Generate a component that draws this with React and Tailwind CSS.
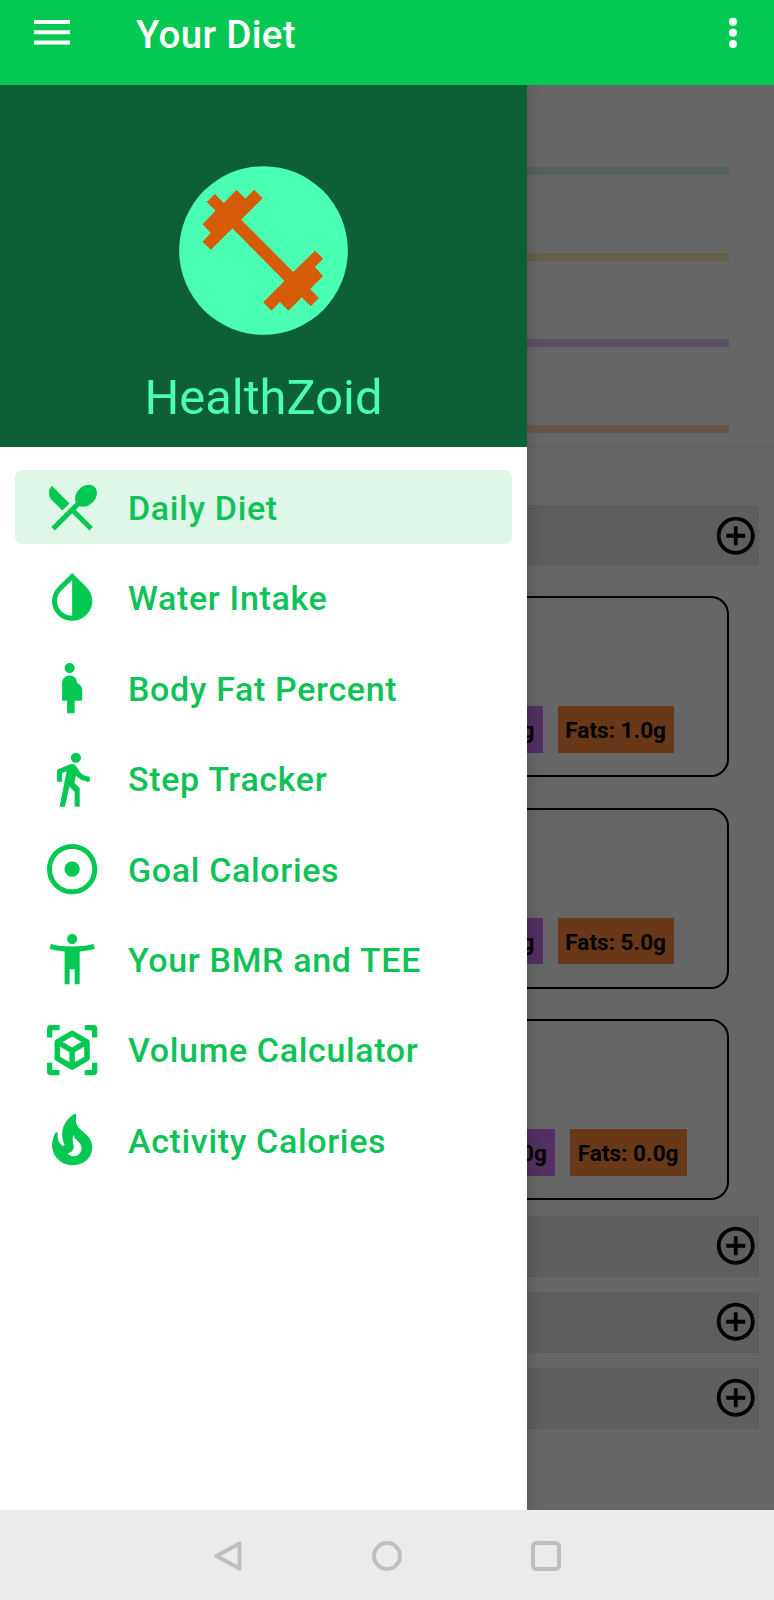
import {
  MdRestaurantMenu,
  MdInvertColors,
  MdPregnantWoman,
  MdDirectionsWalk,
  MdAdjust,
  MdAccessibilityNew,
  MdAddCircleOutline,
} from "react-icons/md";

function CubeScanIcon({ className }) {
  return (
    <svg className={className} viewBox="0 0 24 24" fill="none">
      <path
        fill="currentColor"
        d="M2 7V3.5A1.5 1.5 0 0 1 3.5 2H7v2.1H4.1V7zM17 2h3.5A1.5 1.5 0 0 1 22 3.5V7h-2.100V4.100H17zM22 17v3.5a1.5 1.5 0 0 1-1.5 1.5H17v-2.100h2.900V17zM7 22H3.5A1.5 1.5 0 0 1 2 20.500V17h2.100v2.900H7z"
      />
      <path
        stroke="currentColor"
        strokeWidth="2.2"
        strokeLinejoin="round"
        d="M12 5.300 17.900 8.700V15.300L12 18.700 6.100 15.300V8.700ZM6.100 8.700 12 12.150 17.900 8.700M12 12.150V18.700"
      />
    </svg>
  );
}

function FlameIcon({ className }) {
  return (
    <svg className={className} viewBox="0 0 24 24" fill="currentColor">
      <path d="M19.48 12.35c-1.57-4.08-7.16-4.3-5.81-10.23.1-.44-.37-.78-.75-.55C9.29 3.71 6.68 8 8.87 13.62c.18.46-.36.89-.75.59-1.81-1.37-2-3.34-1.84-4.75.06-.52-.62-.77-.91-.34C4.69 10.16 4 11.84 4 14.37c.38 5.6 5.11 7.32 6.81 7.54 2.43.31 5.06-.14 6.95-1.87 2.08-1.93 2.84-5.01 1.72-7.69zm-9.28 5.03c1.44-.35 2.18-1.39 2.38-2.31.33-1.43-.96-2.83-.09-5.09.33 1.87 3.27 3.04 3.27 5.08.08 2.53-2.66 4.7-5.56 2.32z" />
    </svg>
  );
}

const menu = [
  { label: "Daily Diet", Icon: MdRestaurantMenu, active: true },
  { label: "Water Intake", Icon: MdInvertColors },
  { label: "Body Fat Percent", Icon: MdPregnantWoman },
  { label: "Step Tracker", Icon: MdDirectionsWalk },
  { label: "Goal Calories", Icon: MdAdjust },
  { label: "Your BMR and TEE", Icon: MdAccessibilityNew },
  { label: "Volume Calculator", Icon: CubeScanIcon },
  { label: "Activity Calories", Icon: FlameIcon },
];

function TopBar() {
  return (
    <header className="flex h-[85px] shrink-0 items-start bg-[#03c953] text-white">
      <svg className="ml-[34px] mt-[20px] h-[25px] w-[36px]" viewBox="0 0 36 25" fill="currentColor">
        <path d="M0 0h36v4H0zM0 10.2h36v4H0zM0 20.4h36v4H0z" />
      </svg>
      <h1 className="ml-[66px] mt-[13px] text-[38.500px] leading-[44px] font-medium tracking-[0.3px] whitespace-nowrap">
        Your Diet
      </h1>
      <svg className="ml-auto mr-[36px] mt-[17px] h-[31px] w-[10px]" viewBox="0 0 10 31" fill="currentColor">
        <circle cx="5" cy="4.7" r="4" />
        <circle cx="5" cy="15.7" r="4" />
        <circle cx="5" cy="26.9" r="4" />
      </svg>
    </header>
  );
}

function MealRow() {
  return (
    <div className="mr-[15px] flex h-[61px] items-center justify-end bg-[#5e5e60]">
      <MdAddCircleOutline className="mr-[0.5px] size-[45.5px] text-black" />
    </div>
  );
}

function Badge({ className, children }) {
  return (
    <span
      className={
        "flex h-[46.5px] w-[116.5px] items-center justify-end pt-[3px] pr-[8px] text-[22.6px] font-bold whitespace-nowrap text-black " +
        className
      }
    >
      {children}
    </span>
  );
}

function FoodCard({ fats, wide }) {
  return (
    <div className="mr-[45px] flex h-[181px] items-end justify-end rounded-[18px] border-2 border-black pb-[22.3px]">
      <div className={wide ? "mr-[40.5px] flex gap-[15px]" : "mr-[53px] flex gap-[15px]"}>
        <Badge className="bg-[#532f63]">{wide ? "Carbs: 0.0g" : "Carbs: 1.0g"}</Badge>
        <Badge className="bg-[#683819]">{fats}</Badge>
      </div>
    </div>
  );
}

function DietPage() {
  return (
    <main className="flex h-full flex-col bg-[#666666]">
      <section className="flex h-[362px] shrink-0 flex-col gap-[78px] border-b border-[#5b605d] pt-[82px] pr-[45px]">
        <div className="h-2 shrink-0 bg-[#566259]" />
        <div className="h-2 shrink-0 bg-[#655f48]" />
        <div className="h-2 shrink-0 bg-[#5c5163]" />
        <div className="h-2 shrink-0 bg-[#6a5448]" />
      </section>
      <div className="mt-[58px]">
        <MealRow />
      </div>
      <div className="mt-[30px] flex flex-col gap-[30.5px]">
        <FoodCard fats="Fats: 1.0g" />
        <FoodCard fats="Fats: 5.0g" />
        <FoodCard fats="Fats: 0.0g" wide />
      </div>
      <div className="mt-[15.5px] flex flex-col gap-[15px]">
        <MealRow />
        <MealRow />
        <MealRow />
      </div>
    </main>
  );
}

function Logo() {
  return (
    <svg className="h-[169px] w-[169px]" viewBox="178 79 506 507">
      <circle cx="431" cy="332.5" r="253" fill="#4affb2" />
      <path
        fill="#d65c0a"
        d="M285 163 312 190 350 150 377 177 403 150 428 176 364 240 520 397 586 333 610 357 585 383 610 409 571 448 597 475 573 500 546 473 506 513 480 487 455 513 430 488 494 424 338 266 273 330 248 306 273 280 248 254 287 213 261 187Z"
      />
    </svg>
  );
}

function Drawer() {
  return (
    <aside className="absolute inset-y-0 left-0 flex w-[527px] flex-col bg-white shadow-[0_0_16px_rgba(0,0,0,0.22)]">
      <div className="flex h-[362px] shrink-0 flex-col items-center bg-[#0c5f36] pt-[81px]">
        <Logo />
        <p className="mt-[33.5px] text-[48.8px] leading-[58px] text-[#4affb2]">HealthZoid</p>
      </div>
      <nav className="flex flex-col gap-[16.4px] px-[15px] pt-[23px]">
        {menu.map(({ label, Icon, active }) => (
          <a
            key={label}
            className={
              "flex h-[74px] items-center rounded-[7px] pl-[26.7px] text-[#03c953] " +
              (active ? "bg-[#dff7e9]" : "bg-white")
            }
          >
            <Icon className="mt-px size-[60.3px] shrink-0" />
            <span className="ml-[26px] pt-[2px] text-[34px] leading-[40px] font-medium tracking-[0.65px] whitespace-nowrap text-[#0fc257]">
              {label}
            </span>
          </a>
        ))}
      </nav>
    </aside>
  );
}

function SystemNav() {
  return (
    <footer className="flex h-[90px] shrink-0 items-center justify-center gap-[129px] bg-[#ebebeb] pt-px">
      <svg className="size-[30px]" viewBox="0 0 30 30" fill="none" stroke="#bfbfbf" strokeWidth="4" strokeLinejoin="round">
        <path d="M26.500 2.500v25L3.500 15z" />
      </svg>
      <svg className="size-[30px]" viewBox="0 0 30 30" fill="none" stroke="#bfbfbf" strokeWidth="4">
        <circle cx="15" cy="15" r="13" />
      </svg>
      <svg className="size-[30px]" viewBox="0 0 30 30" fill="none" stroke="#bfbfbf" strokeWidth="4">
        <rect x="2" y="2" width="26" height="26" rx="3.5" />
      </svg>
    </footer>
  );
}

export default function App() {
  return (
    <div className="flex h-[1600px] w-[774px] flex-col overflow-hidden font-['Roboto',sans-serif]">
      <TopBar />
      <div className="relative h-[1425px] overflow-hidden">
        <DietPage />
        <Drawer />
      </div>
      <SystemNav />
    </div>
  );
}
